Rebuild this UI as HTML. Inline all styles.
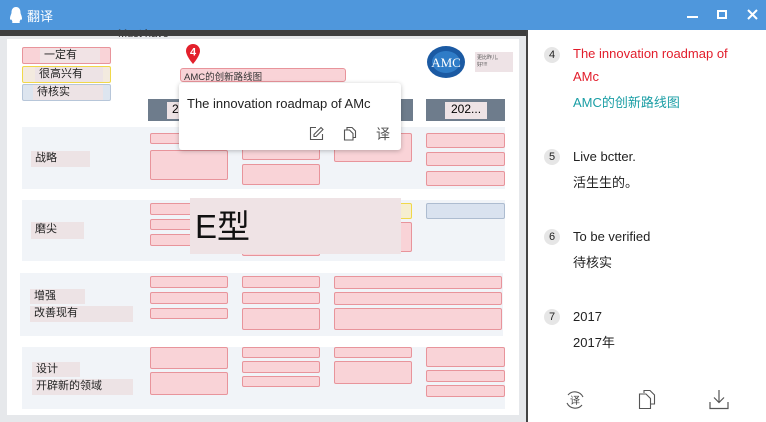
<!DOCTYPE html>
<html><head><meta charset="utf-8"><style>
*{margin:0;padding:0;box-sizing:border-box}
body{width:766px;height:422px;overflow:hidden;background:#fff;font-family:"Liberation Sans","Noto Sans CJK SC",sans-serif;position:relative}
.a{position:absolute}
.p{position:absolute;background:#f9d3d7;border:1.5px solid #e8949b;border-radius:2px}
.row{position:absolute;background:#f1f4f8;left:22px;width:483px}
.lab{position:absolute;background:#ede3e5;font-size:11px;color:#222;padding-left:4px;line-height:15px}
.num{position:absolute;left:544px;width:16px;height:16px;border-radius:50%;background:#e6e6e6;font-size:11px;text-align:center;line-height:16px;color:#222}
.t{position:absolute;left:573px;font-size:13px;color:#222;white-space:nowrap}
</style></head><body>
<div class="a" style="left:0;top:0;width:766px;height:30px;background:#4f97dc"></div>
<svg class="a" style="left:8px;top:6px" width="16" height="18" viewBox="0 0 16 18"><path d="M8 1C4.5 1 3.5 4 3.5 6.5 3.5 8 2 10 2 12.5 2 14 3 14 3.5 13.5 4 15 5 16 4 17H12C11 16 12 15 12.5 13.5 13 14 14 14 14 12.5 14 10 12.5 8 12.5 6.5 12.5 4 11.5 1 8 1Z" fill="#fff"/></svg>
<div class="a" style="left:27px;top:6px;color:#fff;font-size:13px">翻译</div>
<div class="a" style="left:687px;top:16px;width:11px;height:2px;background:#fff"></div>
<div class="a" style="left:717px;top:10px;width:10px;height:9px;border:2px solid #fff"></div>
<svg class="a" style="left:747px;top:9px" width="11" height="11"><path d="M1 1L10 10M10 1L1 10" stroke="#fff" stroke-width="2"/></svg>
<div class="a" style="left:0;top:30px;width:527px;height:392px;background:#e6e8eb"></div>
<div class="a" style="left:118px;top:28px;font-size:11px;color:#333">Must have</div>
<div class="a" style="left:0;top:30px;width:527px;height:6px;background:#3e3e3e"></div>
<div class="a" style="left:7px;top:39px;width:512px;height:376px;background:#fff"></div>
<div class="a" style="left:526px;top:30px;width:2px;height:392px;background:#444"></div>
<div class="p" style="left:22px;top:47px;width:89px;height:17px"></div>
<div class="lab" style="left:40px;top:48px;width:60px;background:#f1e3e5">一定有</div>
<div class="p" style="left:22px;top:66px;width:89px;height:17px;background:#f3eadf;border-color:#f0d84a"></div>
<div class="lab" style="left:35px;top:67px;width:68px">很高兴有</div>
<div class="p" style="left:22px;top:84px;width:89px;height:17px;background:#dde5ef;border-color:#b7c6d9"></div>
<div class="lab" style="left:33px;top:85px;width:70px">待核实</div>
<svg class="a" style="left:185px;top:43px" width="16" height="22"><path d="M8 21C8 21 1 13 1 8A7 7 0 0 1 15 8C15 13 8 21 8 21Z" fill="#e3202b"/><text x="8" y="12.5" font-size="11" font-weight="bold" fill="#fff" text-anchor="middle" font-family="Liberation Sans">4</text></svg>
<div class="p" style="left:180px;top:68px;width:166px;height:14px;border-radius:3px"></div>
<div class="a" style="left:184px;top:69px;font-size:9.5px;color:#333">AMC的创新路线图</div>
<svg class="a" style="left:426px;top:45px" width="40" height="34"><ellipse cx="20" cy="17" rx="19" ry="16" fill="#1b5aa3"/><ellipse cx="20" cy="17" rx="14" ry="11" fill="#2f7cc7"/><text x="20" y="22" font-size="13" fill="#fff" text-anchor="middle" font-family="Liberation Serif">AMC</text></svg>
<div class="a" style="left:475px;top:52px;width:38px;height:20px;background:#eee3e6;font-size:5px;color:#555;padding:2px">更比昨儿,<br>好!!!!</div>
<div class="a" style="left:148px;top:99px;width:265px;height:22px;background:#6e7c8c"></div>
<div class="a" style="left:426px;top:99px;width:79px;height:22px;background:#6e7c8c"></div>
<div class="a" style="left:167px;top:102px;width:20px;height:17px;background:#eee3e5;font-size:12px;padding-left:5px">2</div>
<div class="a" style="left:445px;top:102px;width:42px;height:17px;background:#eee3e5;font-size:12px;padding-left:6px">202...</div>
<div class="row" style="top:127px;height:62px"></div>
<div class="lab" style="left:31px;top:151px;width:59px;height:16px">战略</div>
<div class="p" style="left:150px;top:133px;width:78px;height:11px"></div>
<div class="p" style="left:150px;top:150px;width:78px;height:30px"></div>
<div class="p" style="left:242px;top:146px;width:78px;height:14px"></div>
<div class="p" style="left:242px;top:164px;width:78px;height:21px"></div>
<div class="p" style="left:334px;top:133px;width:78px;height:29px"></div>
<div class="p" style="left:426px;top:133px;width:79px;height:15px"></div>
<div class="p" style="left:426px;top:152px;width:79px;height:14px"></div>
<div class="p" style="left:426px;top:171px;width:79px;height:15px"></div>
<div class="row" style="top:200px;height:61px"></div>
<div class="lab" style="left:31px;top:222px;width:53px;height:17px">磨尖</div>
<div class="p" style="left:150px;top:203px;width:78px;height:12px"></div>
<div class="p" style="left:150px;top:219px;width:78px;height:11px"></div>
<div class="p" style="left:150px;top:234px;width:78px;height:12px"></div>
<div class="p" style="left:242px;top:240px;width:78px;height:16px"></div>
<div class="p" style="left:394px;top:203px;width:18px;height:16px;background:#f6eecf;border-color:#f0d84a"></div>
<div class="p" style="left:394px;top:222px;width:18px;height:30px"></div>
<div class="p" style="left:426px;top:203px;width:79px;height:16px;background:#d9e2ef;border-color:#adbcd0"></div>
<div class="a" style="left:190px;top:198px;width:211px;height:56px;background:#efe3e5;font-size:33px;color:#111;padding-left:5px;line-height:58px">E型</div>
<div class="row" style="top:273px;height:63px;left:20px"></div>
<div class="lab" style="left:30px;top:289px;width:55px;height:15px">增强</div>
<div class="lab" style="left:30px;top:306px;width:103px;height:16px">改善现有</div>
<div class="p" style="left:150px;top:276px;width:78px;height:12px"></div>
<div class="p" style="left:150px;top:292px;width:78px;height:12px"></div>
<div class="p" style="left:150px;top:308px;width:78px;height:11px"></div>
<div class="p" style="left:242px;top:276px;width:78px;height:12px"></div>
<div class="p" style="left:242px;top:292px;width:78px;height:12px"></div>
<div class="p" style="left:242px;top:308px;width:78px;height:22px"></div>
<div class="p" style="left:334px;top:276px;width:168px;height:13px"></div>
<div class="p" style="left:334px;top:292px;width:168px;height:13px"></div>
<div class="p" style="left:334px;top:308px;width:168px;height:22px"></div>
<div class="row" style="top:347px;height:62px"></div>
<div class="lab" style="left:32px;top:362px;width:48px;height:15px">设计</div>
<div class="lab" style="left:32px;top:379px;width:101px;height:16px">开辟新的领域</div>
<div class="p" style="left:150px;top:347px;width:78px;height:22px"></div>
<div class="p" style="left:150px;top:372px;width:78px;height:23px"></div>
<div class="p" style="left:242px;top:347px;width:78px;height:11px"></div>
<div class="p" style="left:242px;top:361px;width:78px;height:12px"></div>
<div class="p" style="left:242px;top:376px;width:78px;height:11px"></div>
<div class="p" style="left:334px;top:347px;width:78px;height:11px"></div>
<div class="p" style="left:334px;top:361px;width:78px;height:23px"></div>
<div class="p" style="left:426px;top:347px;width:79px;height:20px"></div>
<div class="p" style="left:426px;top:370px;width:79px;height:12px"></div>
<div class="p" style="left:426px;top:385px;width:79px;height:12px"></div>
<div class="a" style="left:179px;top:83px;width:222px;height:67px;background:#fff;border-radius:3px;box-shadow:0 1px 5px rgba(0,0,0,.25)"></div>
<div class="a" style="left:187px;top:96px;font-size:13px;color:#222">The innovation roadmap of AMc</div>
<svg class="a" style="left:309px;top:126px" width="15" height="15" fill="none" stroke="#555" stroke-width="1.1"><path d="M7 1.5H1.5V13.5H13.5V8"/><path d="M12 1.5L14 3.5 7 10.5H5V8.5Z"/></svg>
<svg class="a" style="left:343px;top:126px" width="14" height="15" fill="none" stroke="#555" stroke-width="1.1"><path d="M4 3.5V1.5H9L12.5 5V11.5H10"/><path d="M1.5 4H6.5L10 7.5V14H1.5Z"/></svg>
<div class="a" style="left:376px;top:124px;font-size:14px;color:#555">译</div>
<div class="num" style="top:47px">4</div>
<div class="t" style="top:46px;color:#e21d2b">The innovation roadmap of</div>
<div class="t" style="top:69px;color:#e21d2b">AMc</div>
<div class="t" style="top:92px;color:#1a9ea5">AMC的创新路线图</div>
<div class="num" style="top:149px">5</div>
<div class="t" style="top:149px">Live bctter.</div>
<div class="t" style="top:172px">活生生的。</div>
<div class="num" style="top:229px">6</div>
<div class="t" style="top:229px">To be verified</div>
<div class="t" style="top:252px">待核实</div>
<div class="num" style="top:309px">7</div>
<div class="t" style="top:309px">2017</div>
<div class="t" style="top:332px">2017年</div>
<svg class="a" style="left:564px;top:389px" width="22" height="22" fill="none" stroke="#555" stroke-width="1.1"><path d="M4 6A9 9 0 0 1 19 8M18 16A9 9 0 0 1 3 14"/><text x="11" y="15" font-size="10" fill="#444" stroke="none" text-anchor="middle" font-family="Noto Sans CJK SC">译</text></svg>
<svg class="a" style="left:638px;top:389px" width="18" height="21" fill="none" stroke="#555" stroke-width="1.1"><path d="M6 4V1.5H12L16.5 6V15H13"/><path d="M1.5 5H8L12.5 9.5V19.5H1.5Z"/></svg>
<svg class="a" style="left:709px;top:389px" width="20" height="21" fill="none" stroke="#555" stroke-width="1.2"><path d="M10 1V13M5 8.5L10 13.5 15 8.5M1 13V19.5H19V13"/></svg>
</body></html>
